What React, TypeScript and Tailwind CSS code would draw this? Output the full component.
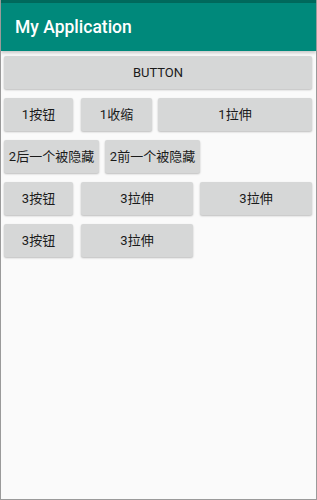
import React from 'react';

type Btn = { label: string; w: number; ml?: number };

const rows: Btn[][] = [
    [{ label: 'BUTTON', w: 308 }],
    [{ label: '1按钮', w: 69 }, { label: '1收缩', w: 71, ml: 8 }, { label: '1拉伸', w: 154, ml: 6 }],
    [{ label: '2后一个被隐藏', w: 95 }, { label: '2前一个被隐藏', w: 95, ml: 6 }],
    [{ label: '3按钮', w: 69 }, { label: '3拉伸', w: 112, ml: 8 }, { label: '3拉伸', w: 112, ml: 7 }],
    [{ label: '3按钮', w: 69 }, { label: '3拉伸', w: 112, ml: 8 }],
];

const AndroidButton = ({ label, w, ml = 0 }: Btn) => (
    <button
        className="h-[33px] shrink-0 rounded-[2px] bg-[#d6d7d7] text-[13px] text-[#1a1a1a] shadow-[0_1px_2px_rgba(0,0,0,0.25)] flex items-center justify-center whitespace-nowrap"
        style={{ width: w, marginLeft: ml }}
    >
        {label}
    </button>
);

export default function App() {
    return (
        <div className="w-[317px] h-[500px] bg-[#fafafa] flex flex-col overflow-hidden border-x border-b border-[#9a9a9a] font-['Roboto','Noto_Sans_CJK_SC',sans-serif]">
            <div className="h-[3px] bg-[#00695c] shrink-0" />
            <div className="h-[48px] bg-[#00897b] shrink-0 flex items-center px-[14px] shadow-[0_2px_3px_rgba(0,0,0,0.2)]">
                <h1 className="text-[17.5px] font-medium text-white">My Application</h1>
            </div>
            <div className="flex flex-col gap-[9px] pt-[5px] px-[3px]">
                {rows.map((row, i) => (
                    <div key={i} className="flex">
                        {row.map((b, j) => <AndroidButton key={j} {...b} />)}
                    </div>
                ))}
            </div>
        </div>
    );
}
